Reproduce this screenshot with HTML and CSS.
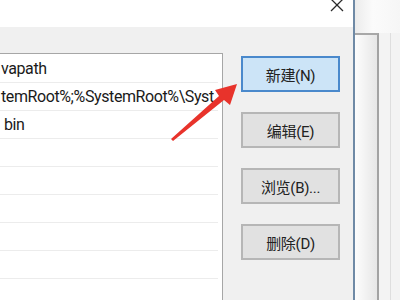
FILE: index.html
```html
<!DOCTYPE html>
<html lang="zh-CN">
<head>
<meta charset="utf-8">
<title>编辑环境变量</title>
<link rel="stylesheet" href="styles.css">
</head>
<body>
<div class="screen">
  <div class="dialog">
    <div class="titlebar">
      <svg class="close" width="14" height="14" viewBox="0 0 14 14"><path d="M1 1 L13 13 M13 1 L1 13" stroke="#2b2b2b" stroke-width="1.3" fill="none"/></svg>
    </div>
    <div class="body">
      <div class="list">
        <div class="row"><span class="cell">vapath</span></div>
        <div class="row"><span class="cell">temRoot%;%SystemRoot%\Syst</span></div>
        <div class="row"><span class="cell cell-bin">bin</span></div>
        <div class="row"></div>
        <div class="row"></div>
        <div class="row"></div>
        <div class="row"></div>
        <div class="row"></div>
        <div class="row"></div>
      </div>
      <div class="buttons">
        <button class="btn btn-default">新建(N)</button>
        <button class="btn">编辑(E)</button>
        <button class="btn">浏览(B)...</button>
        <button class="btn">删除(D)</button>
      </div>
    </div>
  </div>
  <div class="behind">
    <div class="behind-top"></div>
    <div class="behind-main">
      <div class="pane"></div>
      <div class="strip"></div>
    </div>
  </div>
  <svg class="arrow" width="400" height="300" viewBox="0 0 400 300">
    <polygon points="171,139 219,96 215,90 237,84 230,105 224,100 173,141" fill="#e8332b"/>
  </svg>
</div>
</body>
</html>
```

FILE: styles.css
```css
html, body {
  margin: 0;
  padding: 0;
}

body {
  width: 400px;
  height: 300px;
  overflow: hidden;
  background: #f0f0f0;
  font-family: "Noto Sans", "Noto Sans CJK SC", sans-serif;
}

.screen {
  position: relative;
  display: flex;
  width: 400px;
  height: 300px;
  overflow: hidden;
}

.dialog {
  width: 353px;
  flex: none;
  display: flex;
  flex-direction: column;
  background: #f0f0f0;
  border-right: 2px solid #6f8aa6;
}

.titlebar {
  height: 27px;
  flex: none;
  background: #ffffff;
  display: flex;
  justify-content: flex-end;
  align-items: flex-start;
  padding-right: 9px;
}

.close {
  margin-top: -2px;
}

.body {
  flex: 1;
  display: flex;
  align-items: flex-start;
}

.list {
  width: 223px;
  box-sizing: border-box;
  margin-top: 26px;
  padding-top: 1px;
  padding-right: 4px;
  background: #ffffff;
  border-top: 1px solid #a6a6a6;
  border-right: 1px solid #a6a6a6;
  height: 260px;
}

.row {
  height: 27px;
  border-bottom: 1px solid #ececec;
  font-family: Roboto, "Noto Sans CJK SC", sans-serif;
  font-size: 16px;
  letter-spacing: -0.4px;
  line-height: 27px;
  color: #1a1a1a;
  white-space: nowrap;
}

.cell {
  display: block;
  overflow: hidden;
  padding-left: 1px;
}

.cell-bin {
  padding-left: 4px;
}

.buttons {
  margin-left: 18px;
  padding-top: 29px;
  display: flex;
  flex-direction: column;
  gap: 20px;
}

.btn {
  width: 99px;
  height: 36px;
  box-sizing: border-box;
  padding: 0;
  border: 2px solid #b6b6b6;
  background: #e1e1e1;
  color: #222222;
  font-family: Roboto, "Noto Sans CJK SC", sans-serif;
  font-size: 15px;
  letter-spacing: -0.3px;
}

.btn-default {
  border-color: #4a89cc;
  background: #cce4f7;
}

.behind {
  flex: 1;
  display: flex;
  flex-direction: column;
}

.behind-top {
  height: 33px;
  flex: none;
  background: linear-gradient(to right, #ececec, #fbfbfb 40%, #f6f6f6);
}

.behind-main {
  flex: 1;
  display: flex;
}

.pane {
  width: 22px;
  flex: none;
  border-top: 2px solid #a8a8a8;
  border-right: 2px solid #a2a2a2;
  background: linear-gradient(to right, #fdfdfd, #e6e6e6);
}

.strip {
  flex: 1;
  background: linear-gradient(to right, #f3f3f3 0, #f3f3f3 11px, #dedede 11px, #dedede 12px, #f3f3f3 12px);
}

.arrow {
  position: absolute;
  left: 0;
  top: 0;
  pointer-events: none;
}
```
